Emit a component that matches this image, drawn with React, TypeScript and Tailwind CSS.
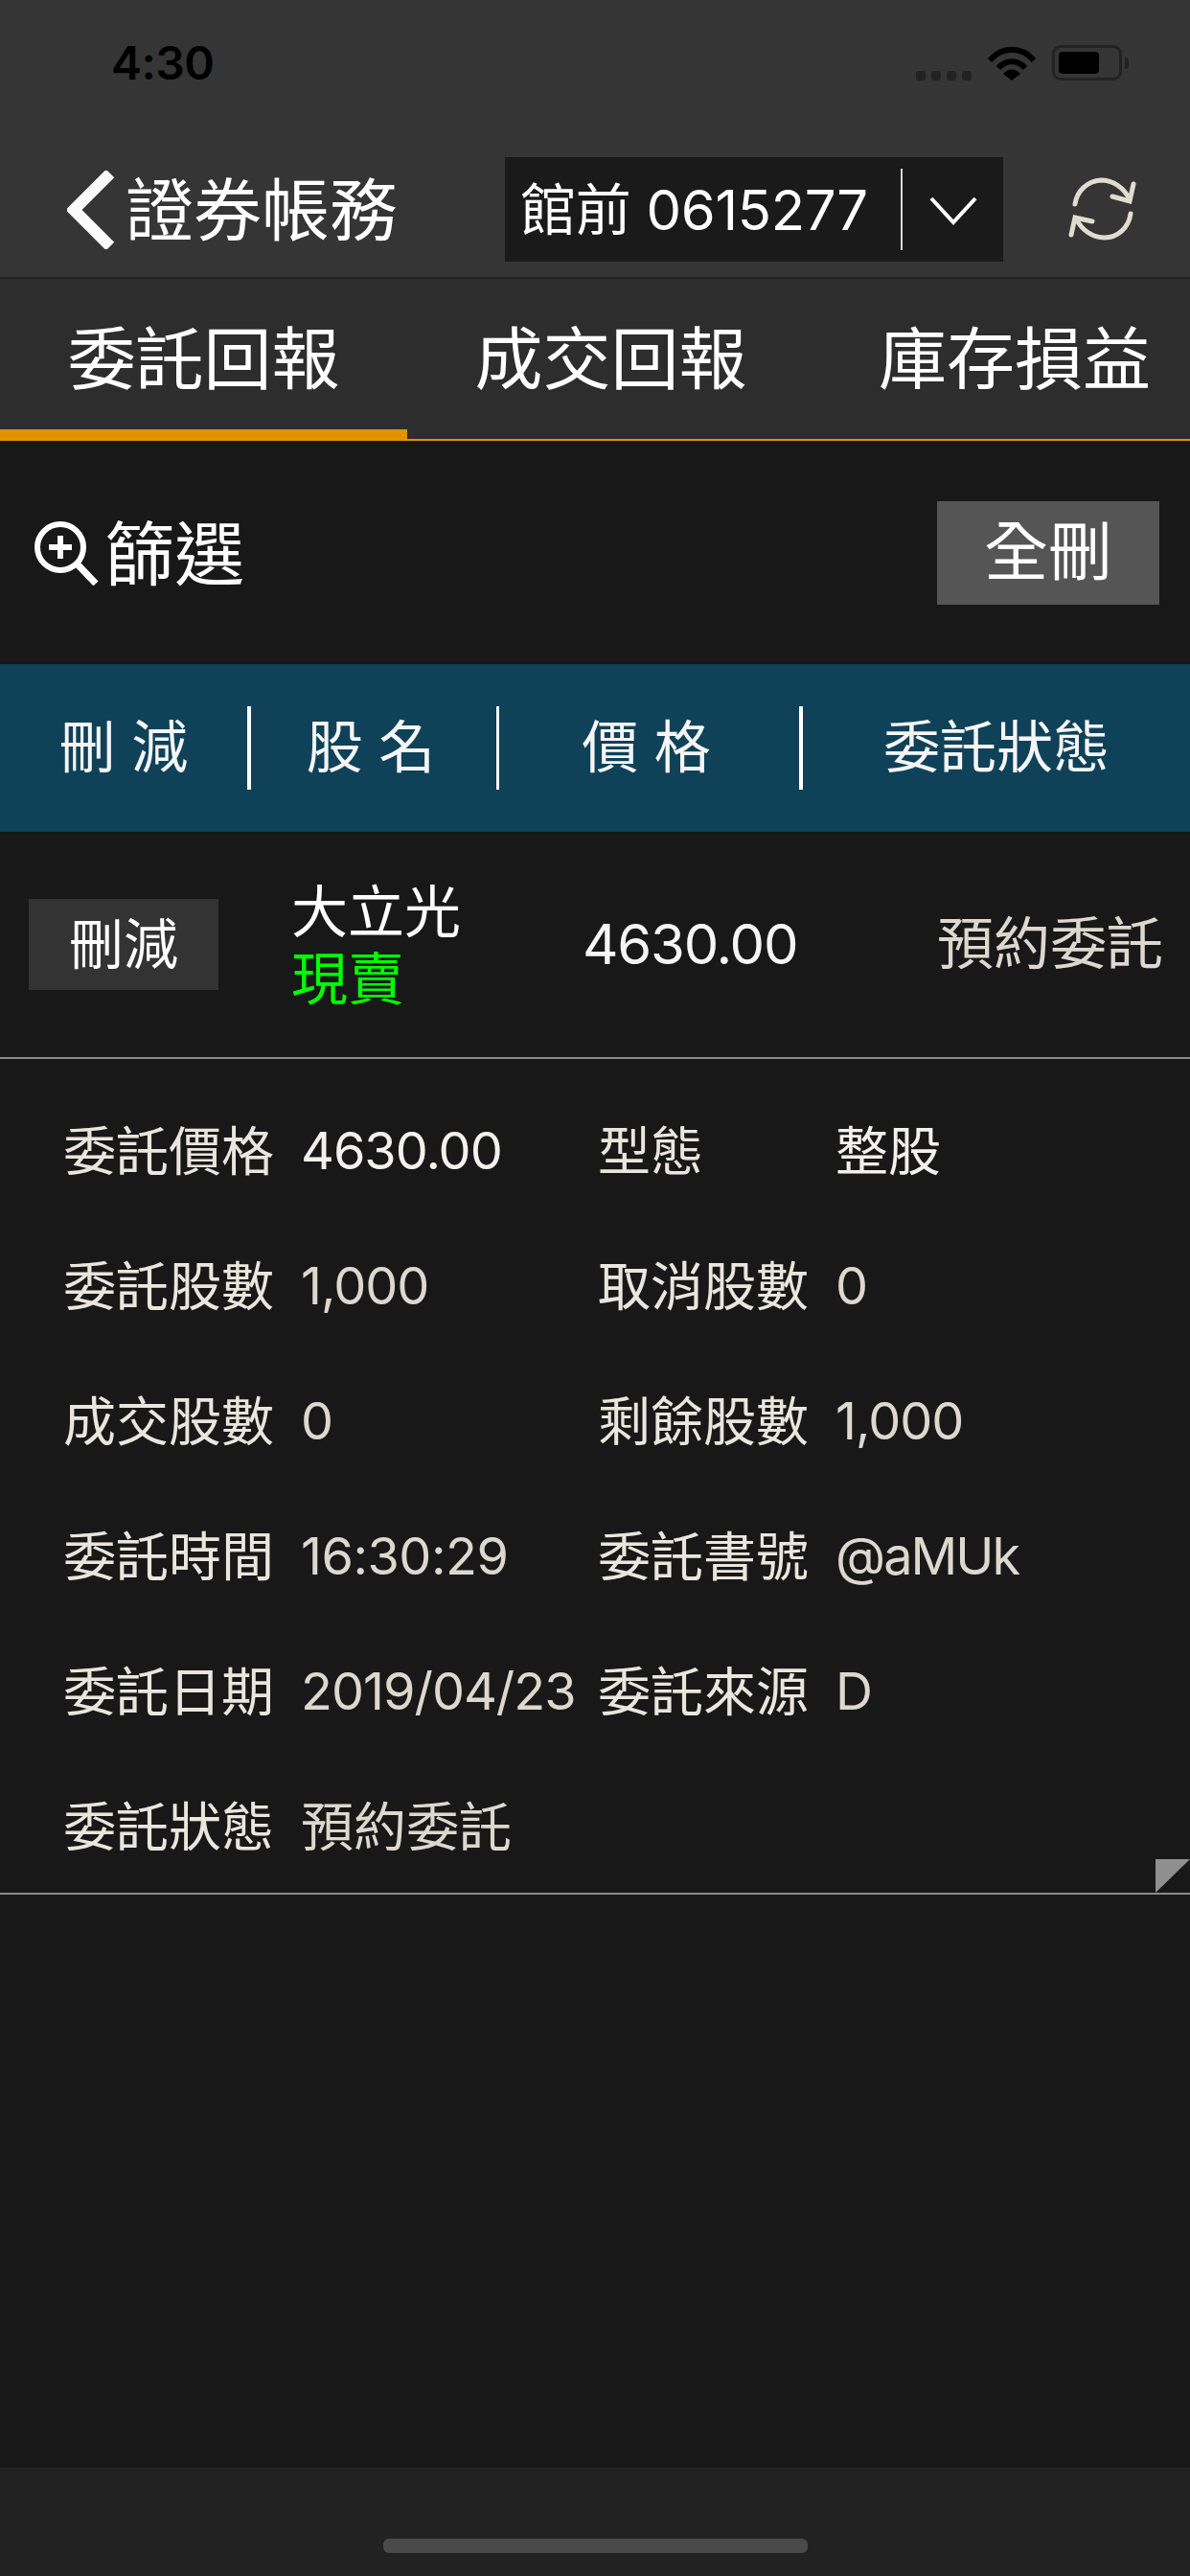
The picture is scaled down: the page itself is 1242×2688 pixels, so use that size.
const FONT = "font-['Inter','Noto_Sans_CJK_TC',sans-serif]";

function Detail({ label, value, bright, tight }: { label: string; value?: string; bright?: boolean; tight?: string }) {
  return (
    <div className="flex items-center h-[141px]">
      <span className="w-[248px] shrink-0 text-[55px] text-[#e9e6dd]">{label}</span>
      <span className={`${bright ? "text-[#f3f1ec]" : "text-[#dcd8cd]"} ${tight ?? "text-[55px]"}`}>{value}</span>
    </div>
  );
}

function StatusBar() {
  return (
    <div className="h-[132px] flex items-start justify-between pl-[116px] pr-[64px] pt-[38px] text-black">
      <span className="text-[48px] leading-[56px] font-semibold tracking-[-0.5px]">4:30</span>
      <div className="flex items-end gap-[17px] pt-[9px]">
        <div className="flex gap-[6px]">
          {[0, 1, 2, 3].map((i) => (
            <div key={i} className="w-[10px] h-[10px] rounded-[3px] bg-[#222]" />
          ))}
        </div>
        <svg width="50" height="37" viewBox="0 0 50 37" fill="none" stroke="#000" strokeWidth="6">
          <path d="M2 16 C15 1 35 1 48 16" />
          <path d="M11 24 C19 15 31 15 39 24" />
          <path d="M16 30 C21 24 29 24 34 30 L25 37 Z" fill="#000" stroke="none" />
        </svg>
        <div className="flex items-center gap-[3px]">
          <div className="w-[73px] h-[37px] rounded-[9px] border-[3px] border-[#222] p-[4px]">
            <div className="w-[42px] h-full rounded-[4px] bg-black" />
          </div>
          <div className="w-[4px] h-[12px] rounded-r-full bg-[#222]" />
        </div>
      </div>
    </div>
  );
}

function NavBar() {
  return (
    <div className="h-[159px] border-b-2 border-[#242424] flex pl-[70px] pr-[55px]">
      <div className="flex items-start">
        <svg width="50" height="82" viewBox="0 0 50 82" fill="none" stroke="#fafafa" strokeWidth="12" className="mt-[46px]">
          <path d="M45 3 L7 41 L45 79" />
        </svg>
        <span className="ml-[11px] mt-[46px] text-[71px] leading-[82px] text-white">證券帳務</span>
      </div>
      <div className="ml-[112px] mt-[32px] w-[520px] h-[109px] bg-[#1a1a1a] flex items-center pl-[16px]">
        <span className="w-[397px] shrink-0 text-[58px] leading-[70px] text-white tracking-[-0.3px]">館前 0615277</span>
        <div className="w-[2px] h-[85px] bg-[#d8d8d8]" />
        <svg width="50" height="30" viewBox="0 0 50 30" fill="none" stroke="#fff" strokeWidth="4" className="ml-[28px] mt-[2px]">
          <path d="M2 2 L25 27 L48 2" />
        </svg>
      </div>
      <svg width="72" height="66" viewBox="0 0 72 66" fill="none" stroke="#e0dcd0" strokeWidth="5" strokeLinecap="round" className="ml-auto mt-[53px]">
        <path d="M7 28 C9 14 20 4 34 3 C47 3 58 11 64 23" />
        <path d="M65 38 C63 53 51 63 38 63 C25 63 14 55 8 43" />
        <path d="M68 7 L64 25 L46 20" />
        <path d="M3 60 L7 42 L25 46" />
      </svg>
    </div>
  );
}

function Tabs() {
  return (
    <div className="h-[169px] bg-[#2d2d2d] border-b-2 border-[#e39200] flex relative text-[71px] text-white">
      <div className="w-[425px] flex items-center justify-center">委託回報</div>
      <div className="w-[425px] flex items-center justify-center">成交回報</div>
      <div className="flex-1 flex items-center justify-center pl-[26px]">庫存損益</div>
      <div className="absolute left-0 bottom-[-2px] w-[425px] h-[12px] bg-[#e39200]" />
    </div>
  );
}

export default function App() {
  return (
    <div className={`w-[1242px] h-[2688px] flex flex-col bg-[#181818] ${FONT}`}>
      <div className="bg-[#353535]">
        <StatusBar />
        <NavBar />
      </div>
      <Tabs />

      <div className="h-[233px] flex items-center justify-between pl-[35px] pr-[32px]">
        <div className="flex items-center">
          <svg width="68" height="68" viewBox="0 0 68 68" fill="none" stroke="#fff" strokeWidth="6">
            <circle cx="28" cy="28" r="24" />
            <path d="M28 16 V40 M16 28 H40" />
            <path d="M45 45 L65 66" strokeWidth="7" />
          </svg>
          <span className="ml-[6px] pt-[5px] text-[73px] leading-[80px] text-white">篩選</span>
        </div>
        <button className="w-[232px] h-[108px] bg-[#555555] text-[67px] text-white">全刪</button>
      </div>

      <div className="h-[175px] bg-[#0f4259] flex items-center text-[59px] text-[#f5f5f5]">
        <div className="w-[258px] text-center whitespace-pre">刪 減</div>
        <div className="w-[4px] h-[87px] bg-white" />
        <div className="w-[256px] pr-[6px] text-center whitespace-pre">股 名</div>
        <div className="w-[3px] h-[87px] bg-white" />
        <div className="w-[313px] pr-[6px] text-center whitespace-pre">價 格</div>
        <div className="w-[4px] h-[87px] bg-white" />
        <div className="flex-1 text-center">委託狀態</div>
      </div>

      <div className="h-[237px] border-b-2 border-[#8a8a8a] flex items-center pl-[30px] text-[59px]">
        <button className="w-[198px] h-[95px] bg-[#333333] text-[57px] text-white">刪減</button>
        <div className="ml-[76px] w-[304px] flex flex-col leading-[70px] pt-[2px]">
          <span className="text-white">大立光</span>
          <span className="text-[#00ff00]">現賣</span>
        </div>
        <div className="w-[370px] text-[58px] tracking-[-1.2px] text-[#f5f5f5]">4630.00</div>
        <div className="text-[#dcd8cd]">預約委託</div>
      </div>

      <div className="relative h-[872px] border-b-2 border-[#8a8a8a] pl-[66px] pt-[25px] leading-[70px] grid grid-cols-[558px_1fr] content-start">
        <Detail label="委託價格" value="4630.00" bright tight="text-[54px] tracking-[-1px]" />
        <Detail label="型態" value="整股" bright />
        <Detail label="委託股數" value="1,000" tight="text-[54px] tracking-[-1px]" />
        <Detail label="取消股數" value="0" tight="text-[54px]" />
        <Detail label="成交股數" value="0" tight="text-[54px]" />
        <Detail label="剩餘股數" value="1,000" tight="text-[54px] tracking-[-1px]" />
        <Detail label="委託時間" value="16:30:29" tight="text-[54px] tracking-[-0.5px]" />
        <Detail label="委託書號" value="@aMUk" tight="text-[54px] tracking-[-2px]" />
        <Detail label="委託日期" value="2019/04/23" tight="text-[54px] tracking-[-1px]" />
        <Detail label="委託來源" value="D" tight="text-[54px]" />
        <Detail label="委託狀態" value="預約委託" />
        <svg width="36" height="35" viewBox="0 0 36 35" className="absolute right-0 bottom-0">
          <path d="M0 0 H36 L0 35 Z" fill="#8f8f8f" />
        </svg>
      </div>

      <div className="flex-1" />

      <div className="h-[113px] bg-[#222222] flex justify-center items-end pb-[24px]">
        <div className="w-[443px] h-[15px] rounded-[6px] bg-[#4a4a4a]" />
      </div>
    </div>
  );
}
